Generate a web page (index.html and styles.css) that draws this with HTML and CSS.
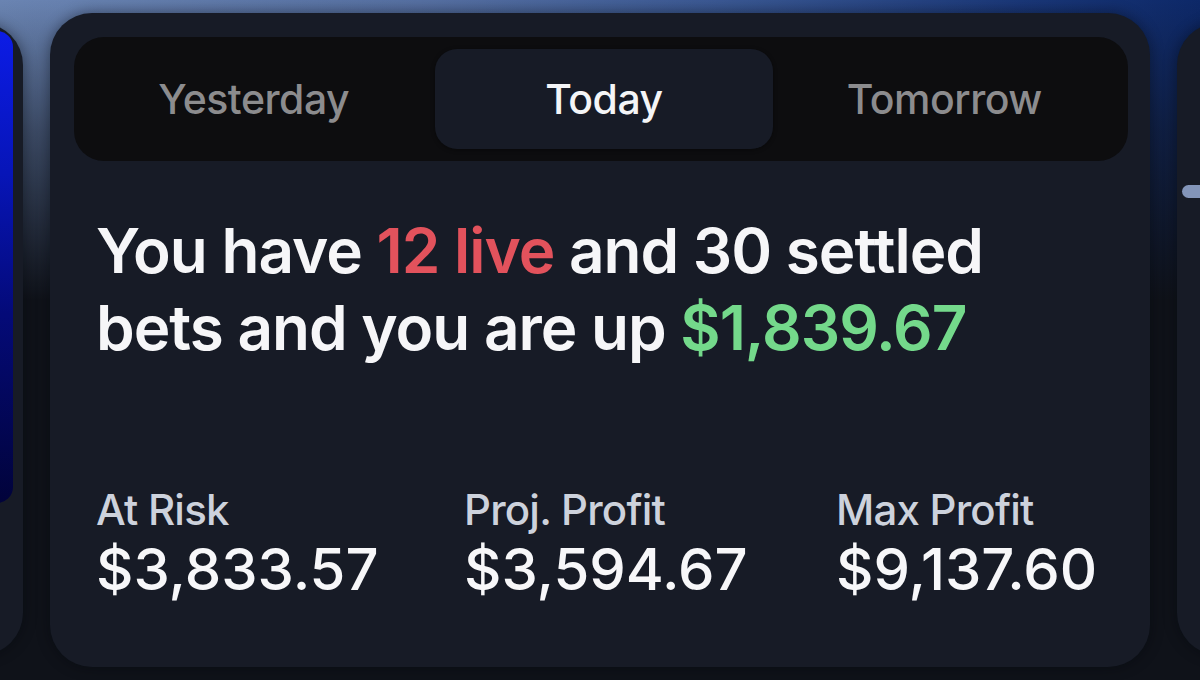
FILE: index.html
```html
<!DOCTYPE html>
<html>
<head>
<meta charset="utf-8">
<link rel="stylesheet" href="styles.css">
</head>
<body>
<div class="carousel">
  <div class="card side left">
    <div class="promo"></div>
  </div>
  <div class="card main">
    <div class="tabs">
      <div class="tab">Yesterday</div>
      <div class="tab active">Today</div>
      <div class="tab">Tomorrow</div>
    </div>
    <p class="headline">You have <span class="live">12 live</span> and 30 settled bets and you are up <span class="up">$1,839.67</span></p>
    <div class="stats">
      <div class="stat">
        <div class="label">At Risk</div>
        <div class="value">$3,833.57</div>
      </div>
      <div class="stat">
        <div class="label">Proj. Profit</div>
        <div class="value">$3,594.67</div>
      </div>
      <div class="stat">
        <div class="label">Max Profit</div>
        <div class="value">$9,137.60</div>
      </div>
    </div>
  </div>
  <div class="card side right">
    <div class="pill"></div>
  </div>
</div>
</body>
</html>
```

FILE: styles.css
```css
html, body {
  margin: 0;
  padding: 0;
}
body {
  width: 1200px;
  height: 680px;
  overflow: hidden;
  font-family: "Inter", "Noto Sans", sans-serif;
  background:
    linear-gradient(to bottom, rgba(15,18,25,0) 0px, rgba(15,18,25,0.5) 130px, #0f1219 300px),
    linear-gradient(90deg, #6a84b2 0%, #5670a2 35%, #3a5893 60%, #1a3778 85%, #0d2868 100%);
}
.carousel {
  display: flex;
  gap: 27px;
  margin-left: -1077px;
  padding-top: 13px;
  height: 654px;
}
.card {
  flex: 0 0 1100px;
  box-sizing: border-box;
  background: #171b26;
  border-radius: 42px;
  box-shadow: 0 0 14px rgba(5,7,12,0.45);
}
.side {
  margin: 10px 0 12px;
}
.left {
  display: flex;
  justify-content: flex-end;
  padding: 8px 10px 0 0;
}
.promo {
  width: 300px;
  height: 472px;
  border-radius: 16px;
  background: linear-gradient(to bottom, #0c1ce6 0%, #0715b8 30%, #040a78 60%, #01033a 100%);
}
.right {
  padding: 162px 0 0 5px;
}
.pill {
  width: 60px;
  height: 13px;
  border-radius: 7px;
  background: #8395b9;
}
.main {
  padding: 24px 22px 0 24px;
}
.tabs {
  display: grid;
  grid-template-columns: 1fr 1fr 1fr;
  padding: 12px;
  background: #0d0d0f;
  border-radius: 30px;
  height: 124px;
  box-sizing: border-box;
}
.tab {
  display: flex;
  align-items: center;
  justify-content: center;
  font-size: 41px;
  font-weight: 500;
  letter-spacing: -0.5px;
  color: #8c8c8e;
  border-radius: 22px;
}
.tab:first-child {
  padding-right: 8px;
}
.tab.active {
  color: #f4f5f7;
  background: #171b26;
  box-shadow: 0 1px 4px rgba(0,0,0,0.4);
  margin-left: 6px;
}
.headline {
  margin: 51px 0 0 22px;
  font-size: 62px;
  line-height: 77px;
  font-weight: 600;
  letter-spacing: -1px;
  color: #f6f6f8;
  width: 920px;
}
.live { color: #e2525c; }
.up { color: #74d98b; }
.stats {
  display: grid;
  grid-template-columns: 368px 372px 1fr;
  margin: 120px 0 0 22px;
}
.label {
  font-size: 42px;
  font-weight: 500;
  letter-spacing: -0.8px;
  color: #cdd2dc;
  line-height: 48px;
}
.value {
  font-size: 58px;
  font-weight: 500;
  letter-spacing: 0;
  color: #f7f7f9;
  line-height: 70px;
}
```
